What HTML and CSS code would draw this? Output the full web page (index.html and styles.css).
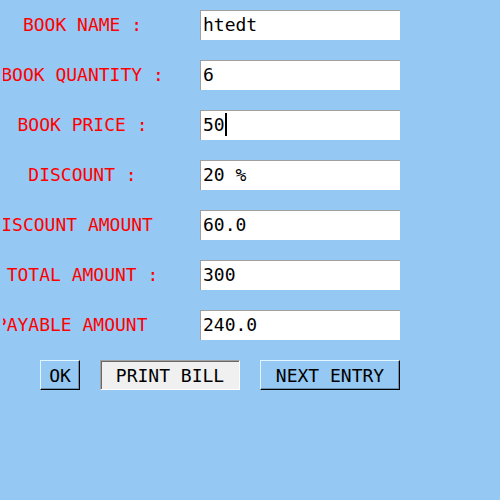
FILE: index.html
```html
<!DOCTYPE html>
<html>
<head>
<meta charset="utf-8">
<link rel="stylesheet" href="styles.css">
</head>
<body>
<div class="form">
  <div class="label"><span>BOOK NAME :</span></div>
  <div class="entry">htedt</div>
  <div class="label"><span>BOOK QUANTITY :</span></div>
  <div class="entry">6</div>
  <div class="label"><span>BOOK PRICE :</span></div>
  <div class="entry">50<span class="caret"></span></div>
  <div class="label"><span>DISCOUNT :</span></div>
  <div class="entry">20 %</div>
  <div class="label"><span>DISCOUNT AMOUNT :</span></div>
  <div class="entry">60.0</div>
  <div class="label"><span>TOTAL AMOUNT :</span></div>
  <div class="entry">300</div>
  <div class="label"><span>PAYABLE AMOUNT :</span></div>
  <div class="entry">240.0</div>
</div>
<div class="buttons">
  <div class="btn btn-ok">OK</div>
  <div class="btn btn-print">PRINT BILL</div>
  <div class="btn btn-next">NEXT ENTRY</div>
</div>
</body>
</html>
```
FILE: styles.css
```css
html, body {
  margin: 0;
  padding: 0;
  background: #95c8f2;
  width: 500px;
  height: 500px;
  overflow: hidden;
  font-family: "DejaVu Sans Mono", monospace;
  font-size: 18px;
}
.form {
  display: grid;
  grid-template-columns: 159px 200px;
  column-gap: 38px;
  row-gap: 20px;
  grid-auto-rows: 30px;
  padding: 10px 0 0 3px;
}
.label {
  display: flex;
  justify-content: center;
  align-items: center;
  overflow: hidden;
  white-space: nowrap;
  color: #ff0000;
  padding-bottom: 2px;
  box-sizing: border-box;
}
.label span {
  flex: none;
}
.entry {
  box-sizing: border-box;
  background: #ffffff;
  border-top: 1px solid #a0a0a0;
  border-left: 1px solid #a0a0a0;
  padding: 0 0 2px 2px;
  color: #000;
  white-space: pre;
  display: flex;
  align-items: center;
}
.caret {
  display: inline-block;
  width: 2px;
  height: 23px;
  background: #000;
}
.buttons {
  display: flex;
  gap: 20px;
  padding: 20px 0 0 40px;
}
.btn {
  box-sizing: border-box;
  height: 30px;
  display: flex;
  align-items: center;
  justify-content: center;
  color: #000;
  border: 1px solid;
  border-color: #e2f6ff #000 #000 #e2f6ff;
  box-shadow: inset -1px -1px 0 #6d8fae;
  background: #95c8f2;
  padding-top: 1px;
}
.btn-ok { width: 40px; }
.btn-print {
  width: 140px;
  background: #f0f0f0;
  border-color: #a0a0a0 #ffffff #ffffff #a0a0a0;
  box-shadow: inset 1px 1px 0 #696969;
}
.btn-next { width: 140px; }
```
